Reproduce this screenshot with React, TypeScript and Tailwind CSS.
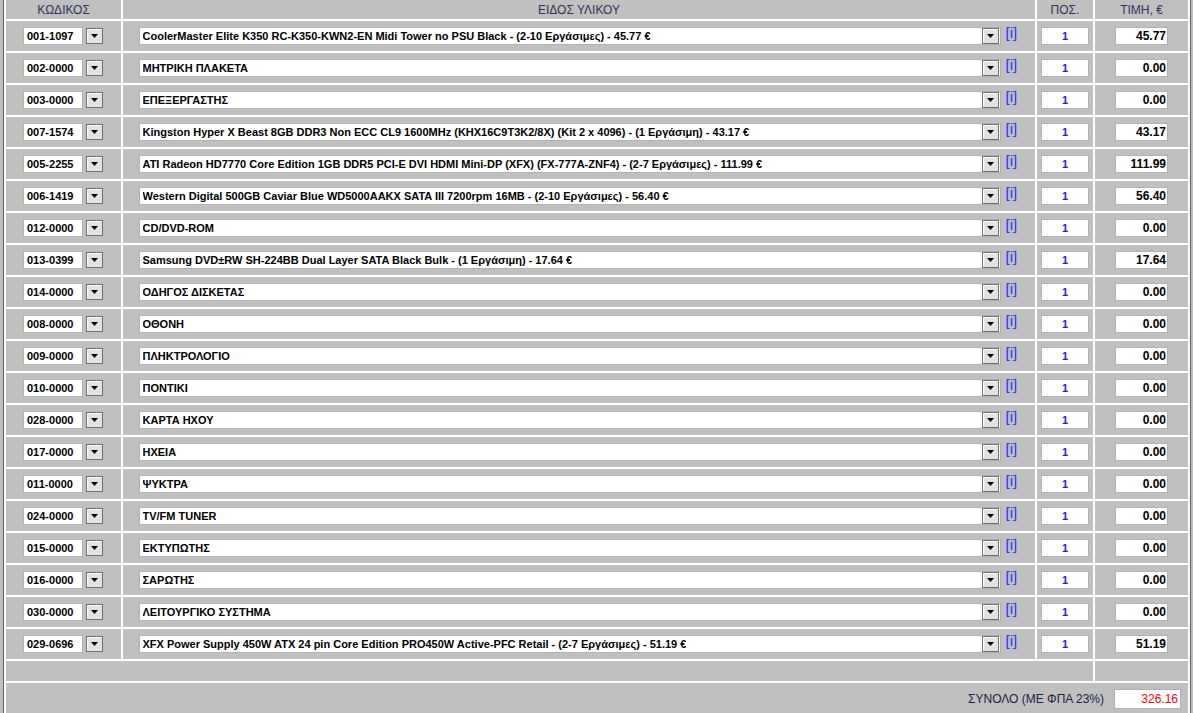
import React from 'react';

type Row = { code: string; name: string; price: string };

const ROWS: Row[] = [
    { code: '001-1097', name: 'CoolerMaster Elite K350 RC-K350-KWN2-EN Midi Tower no PSU Black - (2-10 Εργάσιμες) - 45.77 €', price: '45.77' },
    { code: '002-0000', name: 'ΜΗΤΡΙΚΗ ΠΛΑΚΕΤΑ', price: '0.00' },
    { code: '003-0000', name: 'ΕΠΕΞΕΡΓΑΣΤΗΣ', price: '0.00' },
    { code: '007-1574', name: 'Kingston Hyper X Beast 8GB DDR3 Non ECC CL9 1600MHz (KHX16C9T3K2/8X) (Kit 2 x 4096) - (1 Εργάσιμη) - 43.17 €', price: '43.17' },
    { code: '005-2255', name: 'ATI Radeon HD7770 Core Edition 1GB DDR5 PCI-E DVI HDMI Mini-DP (XFX) (FX-777A-ZNF4) - (2-7 Εργάσιμες) - 111.99 €', price: '111.99' },
    { code: '006-1419', name: 'Western Digital 500GB Caviar Blue WD5000AAKX SATA III 7200rpm 16MB - (2-10 Εργάσιμες) - 56.40 €', price: '56.40' },
    { code: '012-0000', name: 'CD/DVD-ROM', price: '0.00' },
    { code: '013-0399', name: 'Samsung DVD±RW SH-224BB Dual Layer SATA Black Bulk - (1 Εργάσιμη) - 17.64 €', price: '17.64' },
    { code: '014-0000', name: 'ΟΔΗΓΟΣ ΔΙΣΚΕΤΑΣ', price: '0.00' },
    { code: '008-0000', name: 'ΟΘΟΝΗ', price: '0.00' },
    { code: '009-0000', name: 'ΠΛΗΚΤΡΟΛΟΓΙΟ', price: '0.00' },
    { code: '010-0000', name: 'ΠΟΝΤΙΚΙ', price: '0.00' },
    { code: '028-0000', name: 'ΚΑΡΤΑ ΗΧΟΥ', price: '0.00' },
    { code: '017-0000', name: 'ΗΧΕΙΑ', price: '0.00' },
    { code: '011-0000', name: 'ΨΥΚΤΡΑ', price: '0.00' },
    { code: '024-0000', name: 'TV/FM TUNER', price: '0.00' },
    { code: '015-0000', name: 'ΕΚΤΥΠΩΤΗΣ', price: '0.00' },
    { code: '016-0000', name: 'ΣΑΡΩΤΗΣ', price: '0.00' },
    { code: '030-0000', name: 'ΛΕΙΤΟΥΡΓΙΚΟ ΣΥΣΤΗΜΑ', price: '0.00' },
    { code: '029-0696', name: 'XFX Power Supply 450W ATX 24 pin Core Edition PRO450W Active-PFC Retail - (2-7 Εργάσιμες) - 51.19 €', price: '51.19' },
];

// Old-school windows dropdown button
const ArrowBtn = () => (
    <span className="flex h-[16px] w-[17px] items-center justify-center border border-[#707070] bg-[#e3e3e3] shadow-[inset_1px_1px_0_#fff]">
        <svg width="7" height="4" viewBox="0 0 7 4">
            <path d="M0 0h7L3.5 4z" fill="#000" />
        </svg>
    </span>
);

const cell = 'bg-[#c0c0c0]';
const head = `${cell} flex h-[19px] items-center justify-center text-[12px] text-[#333355]`;

export default function App() {
    const total = ROWS.reduce((s, r) => s + parseFloat(r.price), 0).toFixed(2);

    return (
        <div className="h-[713px] w-[1193px] overflow-hidden bg-[#c0c0c0] pl-[3px] font-['Liberation_Sans',Arial,sans-serif]">
            <div className="border-x border-[#606060] bg-white px-[1px] w-[1188px]">
                <div className="grid grid-cols-[115px_912px_56px_93px] gap-[2px] bg-white px-[1px]">
                    {/* header */}
                    <div className={head}>ΚΩΔΙΚΟΣ</div>
                    <div className={head}>ΕΙΔΟΣ ΥΛΙΚΟΥ</div>
                    <div className={head}>ΠΟΣ.</div>
                    <div className={head}>ΤΙΜΗ, €</div>

                    {ROWS.map(r => (
                        <React.Fragment key={r.code}>
                            <div className={`${cell} flex h-[30px] items-center justify-center gap-[3px] pr-[1px]`}>
                                <span className="flex h-[18px] w-[60px] items-center border border-[#b0b0b0] bg-white pl-[3px] text-[11px] font-bold text-black">
                                    {r.code}
                                </span>
                                <ArrowBtn />
                            </div>
                            <div className={`${cell} flex h-[30px] items-center justify-center gap-[5px]`}>
                                <span className="flex h-[18px] w-[862px] items-center justify-between border border-[#b0b0b0] bg-white pl-[3px] pr-[1px]">
                                    <span className="truncate text-[11px] font-bold text-black">{r.name}</span>
                                    <ArrowBtn />
                                </span>
                                <a className="-mt-[8px] w-[14px] text-[15px] leading-none text-[#3333ff]">[i]</a>
                            </div>
                            <div className={`${cell} flex h-[30px] items-center justify-center`}>
                                <span className="flex h-[18px] w-[48px] items-center justify-center border border-[#b0b0b0] bg-white text-[11px] font-bold text-[#2222ee]">
                                    1
                                </span>
                            </div>
                            <div className={`${cell} flex h-[30px] items-center justify-center`}>
                                <span className="flex h-[18px] w-[53px] items-center justify-end border border-[#b0b0b0] bg-white pr-[1px] text-[12px] font-bold text-black">
                                    {r.price}
                                </span>
                            </div>
                        </React.Fragment>
                    ))}

                    {/* spacer row */}
                    <div className={`${cell} col-span-3 h-[20px]`} />
                    <div className={`${cell} h-[20px]`} />

                    {/* total */}
                    <div className={`${cell} col-span-4 flex h-[32px] items-center justify-end gap-[10px] pr-[7px]`}>
                        <span className="text-[12px] text-[#222244]">ΣΥΝΟΛΟ (ΜΕ ΦΠΑ 23%)</span>
                        <span className="flex h-[20px] w-[67px] items-center justify-end border border-[#b0b0b0] bg-white pr-[2px] text-[12px] text-[#ff0000]">
                            {total}
                        </span>
                    </div>
                </div>
            </div>
        </div>
    );
}
